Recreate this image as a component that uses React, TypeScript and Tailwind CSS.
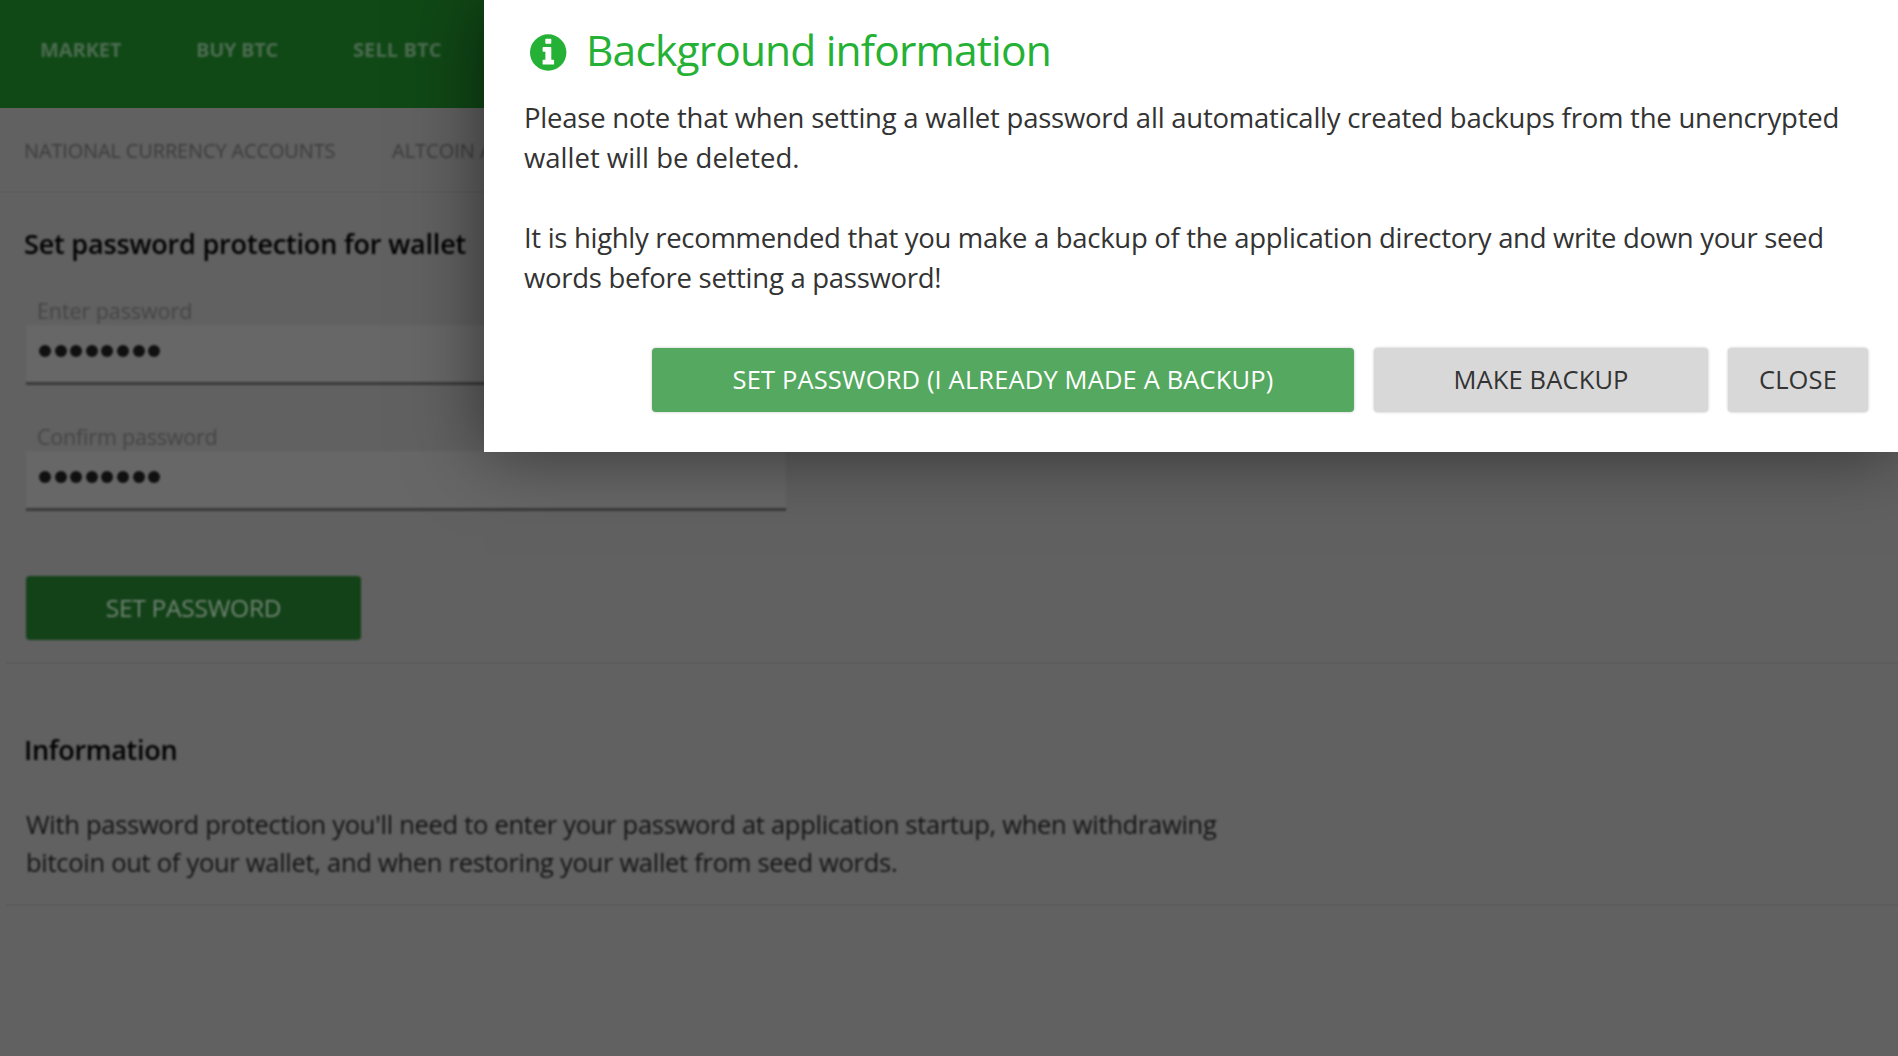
type FieldProps = { label: string; labelClass: string };

function InfoIcon() {
  return (
    <svg className="h-[37px] w-[37px] shrink-0" viewBox="0 0 37 37" aria-hidden="true">
      <circle cx="18.2" cy="18.5" r="18.2" fill="#25b135" />
      <path
        fill="#fff"
        d="M16 4.8h4.6a.7.7 0 0 1 .7.7v3.6a.7.7 0 0 1-.7.7H16a.7.7 0 0 1-.7-.7V5.5a.7.7 0 0 1 .7-.7zM13.3 13h7.3a.7.7 0 0 1 .7.7v12h2.1a.7.7 0 0 1 .7.7v3.5a.7.7 0 0 1-.7.7H13.3a.7.7 0 0 1-.7-.7v-3.5a.7.7 0 0 1 .7-.7h2.1v-7.9h-2.1a.7.7 0 0 1-.7-.7v-3.4a.7.7 0 0 1 .7-.7z"
      />
    </svg>
  );
}

function PasswordField({ label, labelClass }: FieldProps) {
  return (
    <div className="w-[760px]">
      <div className={`pl-[11px] text-[21.5px] leading-7 text-[#454545] ${labelClass}`}>{label}</div>
      <div className="flex h-[60px] items-start gap-[3.6px] border-b-[3px] border-[#3a3a3a] bg-[#676767] pt-5 pl-[13px]">
        {Array.from({ length: 8 }, (_, i) => (
          <span key={i} className="size-3 rounded-full bg-[#101010]" />
        ))}
      </div>
    </div>
  );
}

function SettingsPage() {
  return (
    <div className="h-full w-full">
      <nav className="h-[108px] bg-[#104816] pt-9 pl-10">
        <div className="flex text-[20px] leading-7 font-bold whitespace-nowrap text-[#4d6c51] blur-[0.8px]">
          <span className="w-[156px] tracking-[-0.07px]">MARKET</span>
          <span className="w-[157px] tracking-[-0.3px]">BUY BTC</span>
          <span className="tracking-[0.1px]">SELL BTC</span>
        </div>
      </nav>
      <nav className="h-[85px] border-b-2 border-[#5d5d5d] pt-[29px] pl-6">
        <div className="flex text-[20px] leading-7 font-medium whitespace-nowrap text-[#3c3c3c] blur-[0.8px]">
          <span className="w-[368px] tracking-[-0.15px]">NATIONAL CURRENCY ACCOUNTS</span>
          <span>ALTCOIN A</span>
        </div>
      </nav>
      <section className="pt-[33px] pl-6 blur-[0.8px]">
        <h2 className="text-[27px] leading-9 font-semibold tracking-[-0.18px] text-[#020202]">
          Set password protection for wallet
        </h2>
        <div className="mt-[35px] flex flex-col gap-[38px] pl-[2px]">
          <PasswordField label="Enter password" labelClass="tracking-[-0.08px]" />
          <PasswordField label="Confirm password" labelClass="tracking-[-0.2px]" />
        </div>
        <button className="mt-[65px] ml-[2px] block h-16 w-[335px] rounded-[4px] bg-[#134218] text-[24.5px] tracking-[-0.25px] text-[#728374]">
          SET PASSWORD
        </button>
      </section>
      <hr className="mt-[22px] ml-[6px] border-t-2 border-[#5d5d5d]" />
      <section className="pt-[68px] pl-6 blur-[0.8px]">
        <h2 className="text-[27px] leading-9 font-semibold tracking-[-0.3px] text-[#020202]">Information</h2>
        <p className="mt-[37px] pl-[2px] text-[25.5px] leading-[38px] tracking-[-0.28px] whitespace-nowrap text-[#141414]">
          With password protection you'll need to enter your password at application startup, when withdrawing
          <br />
          bitcoin out of your wallet, and when restoring your wallet from seed words.
        </p>
      </section>
      <hr className="mt-[23px] ml-[6px] border-t-2 border-[#5d5d5d]" />
    </div>
  );
}

function BackgroundInfoDialog() {
  return (
    <div
      role="dialog"
      className="absolute top-0 left-[484px] h-[452px] w-[1414px] bg-white pt-5 shadow-[0_0_70px_rgba(0,0,0,0.5)]"
    >
      <div className="flex items-center gap-[19.5px] pl-[45.5px]">
        <div className="pt-[5px]">
          <InfoIcon />
        </div>
        <h1 className="text-[42.5px] leading-[60px] tracking-[-0.84px] whitespace-nowrap text-[#25b135]">
          Background information
        </h1>
      </div>
      <div className="mt-[18px] pl-10 text-[27.5px] leading-10 whitespace-nowrap text-[#333333]">
        <p className="tracking-[-0.23px]">
          Please note that when setting a wallet password all automatically created backups from the unencrypted
          <br />
          <span className="tracking-[0px]">wallet will be deleted.</span>
        </p>
        <p className="mt-10 tracking-[-0.31px]">
          It is highly recommended that you make a backup of the application directory and write down your seed
          <br />
          <span className="tracking-[-0.27px]">words before setting a password!</span>
        </p>
      </div>
      <div className="mt-[50px] flex h-16 justify-end gap-5 pr-[30px] text-[25.5px] tracking-[0.14px] whitespace-nowrap text-[#333333]">
        <button className="w-[702px] rounded-[4px] bg-[#55a85f] pb-[2px] text-white shadow-[0_0_3px_rgba(0,0,0,0.25)]">
          SET PASSWORD (I ALREADY MADE A BACKUP)
        </button>
        <button className="w-[334px] rounded-[4px] bg-[#d8d8d8] pb-[2px] shadow-[0_0_3px_rgba(0,0,0,0.25)]">MAKE BACKUP</button>
        <button className="w-[140px] rounded-[4px] bg-[#d8d8d8] pb-[2px] shadow-[0_0_3px_rgba(0,0,0,0.25)]">CLOSE</button>
      </div>
    </div>
  );
}

export default function App() {
  return (
    <div className="relative h-[1056px] w-[1898px] overflow-hidden bg-[#616161] font-['Open_Sans',sans-serif]">
      <SettingsPage />
      <BackgroundInfoDialog />
    </div>
  );
}
